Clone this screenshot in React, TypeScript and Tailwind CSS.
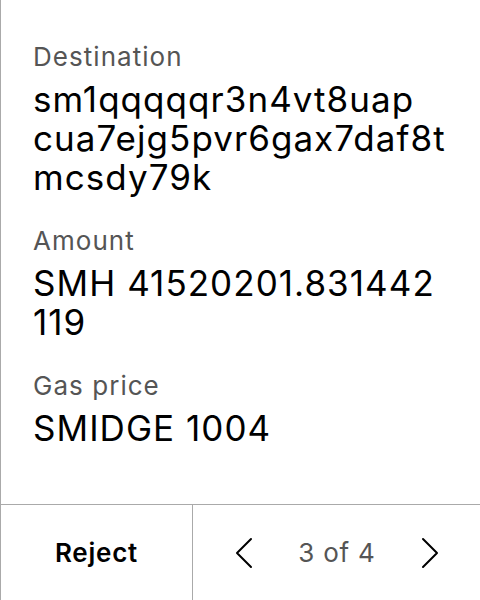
import { Fragment } from "react";

const fields = [
  { label: "Destination", value: ["sm1qqqqqr3n4vt8uap", "cua7ejg5pvr6gax7daf8t", "mcsdy79k"] },
  { label: "Amount", value: ["SMH 41520201.831442", "119"] },
  { label: "Gas price", value: ["SMIDGE 1004"] },
];

function Chevron({ dir }: { dir: "left" | "right" }) {
  return (
    <svg width="18" height="32" viewBox="0 0 18 32" fill="none">
      <path
        d={dir === "left" ? "M16 2 L2 16 L16 30" : "M2 2 L16 16 L2 30"}
        stroke="#000"
        strokeWidth="2"
        strokeLinecap="round"
        strokeLinejoin="round"
      />
    </svg>
  );
}

export default function App() {
  return (
    <div
      className="flex h-[600px] w-[480px] flex-col border-l border-[#aaaaaa] bg-white text-black"
      style={{ fontFamily: "Inter, 'Noto Sans', sans-serif" }}
    >
      <div className="flex flex-1 flex-col gap-[28px] pl-[32px] pr-[32px] pt-[41px]">
        {fields.map((f) => (
          <div key={f.label} className="flex flex-col gap-[7px]">
            <p className="text-[26px] leading-[32px] tracking-[0.04em] text-[#555555]">{f.label}</p>
            <p className="text-[35px] leading-[39px] tracking-[0.03em] [overflow-wrap:anywhere]">
              {f.value.map((chunk, i) => (
                <Fragment key={i}>
                  {i > 0 && <wbr />}
                  {chunk}
                </Fragment>
              ))}
            </p>
          </div>
        ))}
      </div>
      <div className="flex h-[96px] border-t border-[#aaaaaa]">
        <button className="flex w-[192px] items-center justify-center border-r border-[#aaaaaa] text-[26px] font-semibold tracking-[0.03em]">
          Reject
        </button>
        <div className="flex flex-1 items-center justify-between pl-[42px] pr-[41px]">
          <Chevron dir="left" />
          <span className="text-[26px] tracking-[0.03em] text-[#555555]">3 of 4</span>
          <Chevron dir="right" />
        </div>
      </div>
    </div>
  );
}
